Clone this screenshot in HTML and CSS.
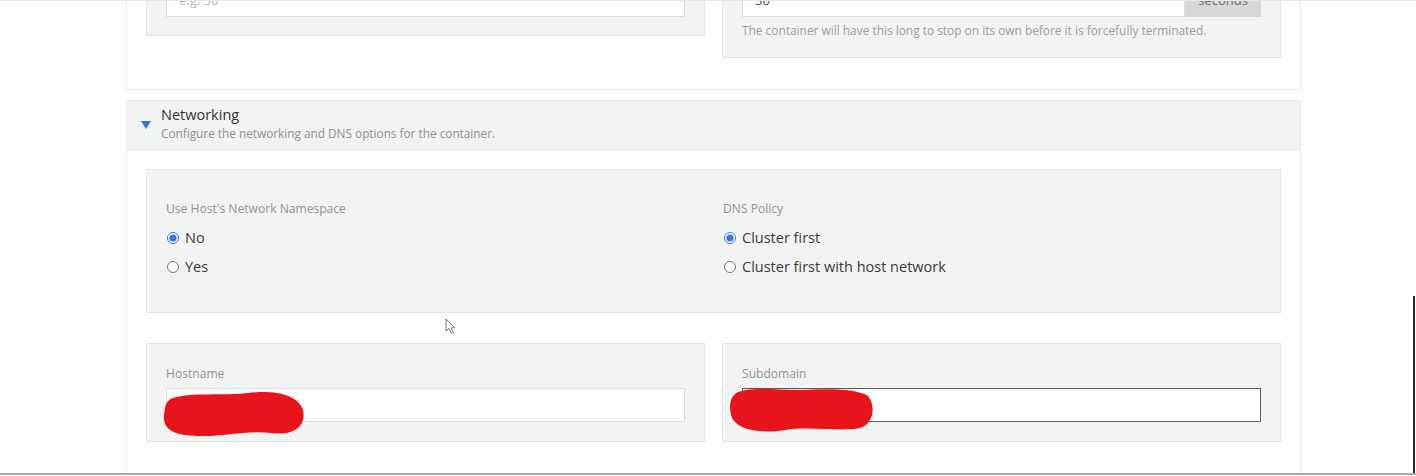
FILE: index.html
```html
<!DOCTYPE html>
<html>
<head>
<meta charset="utf-8">
<link rel="stylesheet" href="styles.css">
</head>
<body>
<div class="viewport">
  <div class="scroll">
    <section class="card card-prev">
      <div class="row">
        <div class="box box-top">
          <div class="input placeholder">e.g. 30</div>
        </div>
        <div class="box box-top">
          <div class="input-group">
            <div class="input">30</div>
            <div class="addon">seconds</div>
          </div>
          <p class="help">The container will have this long to stop on its own before it is forcefully terminated.</p>
        </div>
      </div>
    </section>

    <section class="card card-net">
      <header class="acc-head">
        <span class="caret"></span>
        <div class="acc-titles">
          <h3 class="acc-title">Networking</h3>
          <p class="acc-sub">Configure the networking and DNS options for the container.</p>
        </div>
      </header>
      <div class="acc-body">
        <div class="box box-net">
          <div class="cols">
            <div class="col">
              <div class="lbl">Use Host's Network Namespace</div>
              <label class="radio"><input type="radio" name="hostnet" checked><span>No</span></label>
              <label class="radio"><input type="radio" name="hostnet"><span>Yes</span></label>
            </div>
            <div class="col">
              <div class="lbl">DNS Policy</div>
              <label class="radio"><input type="radio" name="dns" checked><span>Cluster first</span></label>
              <label class="radio"><input type="radio" name="dns"><span>Cluster first with host network</span></label>
            </div>
          </div>
        </div>
        <div class="row row-names">
          <div class="box box-name">
            <div class="lbl">Hostname</div>
            <div class="input"></div>
            <svg class="blob blob-a" viewBox="0 0 142 48" width="142" height="48"><path d="M10 8 C30 2 60 6 85 3 C110 0 135 4 140 20 C144 38 128 46 108 43 C85 40 60 47 35 46 C12 46 0 40 1 26 C2 14 4 10 10 8 Z" fill="#e8141b"/></svg>
          </div>
          <div class="box box-name">
            <div class="lbl">Subdomain</div>
            <div class="input focused"></div>
            <svg class="blob blob-b" viewBox="0 0 144 46" width="144" height="46"><path d="M8 6 C25 0 48 4 70 4 C95 3 125 2 138 10 C146 20 144 38 130 42 C110 46 80 40 55 44 C30 48 8 44 2 32 C-2 20 0 10 8 6 Z" fill="#e8141b"/></svg>
          </div>
        </div>
      </div>
    </section>
  </div>
  <svg class="cursor" width="12" height="17" viewBox="0 0 12 17"><path d="M1 1 L1 13 L4 10.5 L6.5 15.5 L8.3 14.6 L6 9.8 L10 9.8 Z" fill="#fff" stroke="#777" stroke-width="1"/></svg>
  <div class="edge-right"></div>
  <div class="edge-bottom"></div>
</div>
</body>
</html>
```
FILE: styles.css
```css
* { box-sizing: border-box; }
html, body { margin: 0; padding: 0; background: #fff; }
body {
  font-family: "Open Sans", "Liberation Sans", sans-serif;
  color: #3d3d3d;
}
.viewport {
  position: relative;
  width: 1416px;
  height: 476px;
  overflow: hidden;
  border-top: 1px solid #e6e7e8;
}
.scroll {
  margin-top: -79px;
  padding-left: 126px;
  width: 1301px;
}
.card {
  border: 1px solid #ebeded;
  background: #fff;
}
.card-prev {
  border-top: none;
  padding: 60px 19px 31px 19px;
}
.row {
  display: grid;
  grid-template-columns: 1fr 1fr;
  column-gap: 17px;
  align-items: start;
}
.box {
  background: #f2f3f3;
  border: 1px solid #e3e6e7;
}
.box-top {
  padding: 0 19px 18px 19px;
}
.lbl {
  font-size: 12.1px;
  line-height: 16px;
  color: #8f9498;
}
.input {
  height: 34px;
  background: #fff;
  border: 1px solid #dcdfe1;
  font-size: 13px;
  line-height: 32px;
  padding: 0 12px;
  color: #555;
}
.placeholder { color: #b5b8bb; }
.input-group { display: flex; }
.input-group .input { flex: 1; }
.addon {
  width: 76px;
  height: 34px;
  background: #d3d8db;
  color: #6c7177;
  font-size: 13px;
  line-height: 34px;
  text-align: center;
}
.help {
  margin: 5px 0 0;
  font-size: 11.9px;
  line-height: 17px;
  color: #9a9ea3;
}
.card-net {
  margin-top: 10px;
  border-bottom: none;
  min-height: 400px;
}
.acc-head {
  display: flex;
  align-items: flex-start;
  gap: 10px;
  background: #f2f3f3;
  border-bottom: 1px solid #e4e6e7;
  height: 49px;
  padding: 4px 0 0 14px;
}
.caret {
  width: 0; height: 0;
  border-left: 5px solid transparent;
  border-right: 5px solid transparent;
  border-top: 8px solid #3f73cf;
  margin-top: 16px;
}
.acc-titles { display: flex; flex-direction: column; }
.acc-title {
  margin: 0;
  font-weight: 400;
  font-size: 14.5px;
  line-height: 20px;
  color: #333;
}
.acc-sub {
  margin: 0;
  font-size: 11.8px;
  line-height: 17px;
  color: #8c9196;
}
.acc-body {
  padding: 19px 19px 0 19px;
}
.box-net {
  height: 144px;
  padding: 31px 19px 0 19px;
}
.cols {
  display: grid;
  grid-template-columns: 1fr 1fr;
  column-gap: 19px;
}
.col .lbl { margin-bottom: 6px; }
.radio {
  display: flex;
  align-items: center;
  height: 29px;
  font-size: 14.5px;
  color: #3b3b3b;
}
.radio input {
  margin: 0 6px 0 1px;
  width: 12px;
  height: 12px;
  accent-color: #3f73e0;
}
.row-names { margin-top: 30px; }
.box-name {
  position: relative;
  padding: 22px 19px 19px 19px;
}
.box-name .lbl { margin-bottom: 6px; }
.input.focused { border-color: #5e5e5e; }
.blob { position: absolute; }
.blob-a { left: 16px; top: 46px; }
.blob-b { left: 7px; top: 42px; }
.cursor { position: absolute; left: 445px; top: 317px; }
.edge-right {
  position: absolute;
  left: 1413px; top: 295px;
  width: 3px; height: 181px;
  border-left: 2px solid #2a2a2a;
}
.edge-bottom {
  position: absolute;
  left: 0; top: 472px;
  width: 1416px; height: 4px;
  border-top: 2px solid #a9a9a9;
  background: #fff;
}
```
